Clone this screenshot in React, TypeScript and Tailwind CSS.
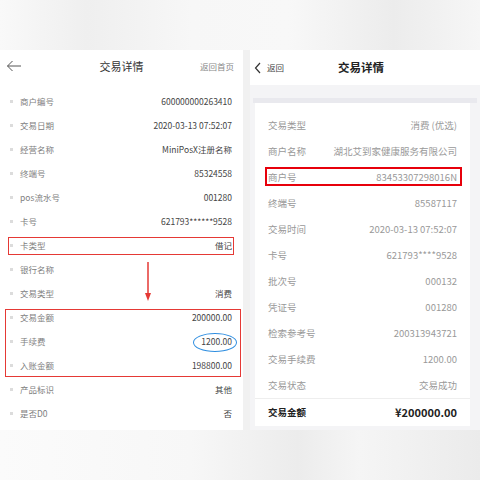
import React from "react";

const font = { fontFamily: '"Noto Sans CJK SC", "Noto Sans", sans-serif' };

const leftRows: [string, string][] = [
  ["商户编号", "600000000263410"],
  ["交易日期", "2020-03-13 07:52:07"],
  ["经营名称", "MiniPosX注册名称"],
  ["终端号", "85324558"],
  ["pos流水号", "001280"],
  ["卡号", "621793******9528"],
  ["卡类型", "借记"],
  ["银行名称", ""],
  ["交易类型", "消费"],
  ["交易金额", "200000.00"],
  ["手续费", "1200.00"],
  ["入账金额", "198800.00"],
  ["产品标识", "其他"],
  ["是否D0", "否"],
];

const rightRows: [string, string][] = [
  ["交易类型", "消费 (优选)"],
  ["商户名称", "湖北艾到家健康服务有限公司"],
  ["商户号", "83453307298016N"],
  ["终端号", "85587117"],
  ["交易时间", "2020-03-13 07:52:07"],
  ["卡号", "621793****9528"],
  ["批次号", "000132"],
  ["凭证号", "001280"],
  ["检索参考号", "200313943721"],
  ["交易手续费", "1200.00"],
  ["交易状态", "交易成功"],
];

export default function App() {
  return (
    <div
      className="w-[480px] h-[480px] overflow-hidden flex flex-col bg-[#f6f6f6]"
      style={font}
    >
      <div className="h-[50px] bg-[linear-gradient(90deg,#f9f9f9_0%,#efefef_18%,#f7f7f7_40%,#f8f8f8_60%,#ececec_82%,#f6f6f6_100%)]" />
      <div className="flex h-[380px]">
        {/* Left panel */}
        <div className="w-[243px] bg-white flex flex-col relative">
          <div className="h-[32px] flex items-center px-[6px] relative">
            <svg width="16" height="12" viewBox="0 0 16 12">
              <path d="M15 6H1.5M6.5 1L1.5 6l5 5" stroke="#555" strokeWidth="1" fill="none" />
            </svg>
            <div className="absolute left-0 right-0 text-center text-[11px] text-[#333] pointer-events-none">交易详情</div>
            <div className="ml-auto mr-[3px] text-[8.5px] text-[#888]">返回首页</div>
          </div>
          <div className="pt-[7px] flex flex-col">
            {leftRows.map(([k, v]) => (
              <div key={k} className="h-[24px] flex items-center pl-[10px] pr-[11px]">
                <span className="w-[3px] h-[3px] bg-[#dcdcdc] mr-[7px]" />
                <span className="text-[8.5px] text-[#808080]">{k}</span>
                <span className="ml-auto text-[8.5px] text-[#444]">{v}</span>
              </div>
            ))}
          </div>
          <div className="absolute left-[8px] top-[187px] w-[226px] h-[18px] border border-[#e53935]" />
          <div className="absolute left-[5px] top-[259px] w-[236px] h-[68px] border-[1.5px] border-[#e53935]" />
          <div className="absolute left-[193px] top-[283px] w-[44px] h-[19px] rounded-[50%] border border-[#2f8ee0]" />
          <svg className="absolute left-[144px] top-[212px]" width="8" height="40" viewBox="0 0 8 40">
            <path d="M4 0V33" stroke="#e53935" strokeWidth="1.5" />
            <path d="M1 31L4 39L7 31Z" fill="#e53935" />
          </svg>
        </div>
        <div className="w-[7px] bg-[#f1f1f1]" />
        {/* Right panel */}
        <div className="flex-1 flex flex-col bg-[#f4f4f6]">
          <div className="h-[35px] bg-white flex items-center relative">
            <svg width="8" height="12" viewBox="0 0 8 12" className="ml-[4px]">
              <path d="M6 1L1.5 6L6 11" stroke="#333" strokeWidth="1.2" fill="none" />
            </svg>
            <span className="ml-[5px] text-[8.5px] text-[#444]">返回</span>
            <div className="absolute left-[88px] text-[11.5px] font-bold text-[#222]">交易详情</div>
          </div>
          <div className="h-[13px]" />
          <div className="h-[5px] mx-[3px] bg-[#e9e9ee]" />
          <div className="ml-[5px] mr-[10px] bg-white flex flex-col px-[13px] pt-[9px] relative">
            {rightRows.map(([k, v]) => (
              <div key={k} className="h-[26px] flex items-center">
                <span className="text-[9.5px] text-[#999]">{k}</span>
                <span className="ml-auto text-[9.5px] text-[#999]">{v}</span>
              </div>
            ))}
            <div className="border-t border-[#eeeeee] -mx-[13px]" />
            <div className="h-[27px] flex items-center">
              <span className="text-[9.5px] font-bold text-[#222]">交易金额</span>
              <span className="ml-auto text-[11px] font-bold text-[#222]">¥200000.00</span>
            </div>
            <div className="absolute left-[10px] top-[64px] w-[197px] h-[19px] border-2 border-red-600" />
          </div>
        </div>
      </div>
      <div className="flex-1 bg-[linear-gradient(90deg,#fbfbfb_0%,#f7f7f7_40%,#ececec_62%,#f5f5f5_75%,#ebebeb_100%)]" />
    </div>
  );
}
